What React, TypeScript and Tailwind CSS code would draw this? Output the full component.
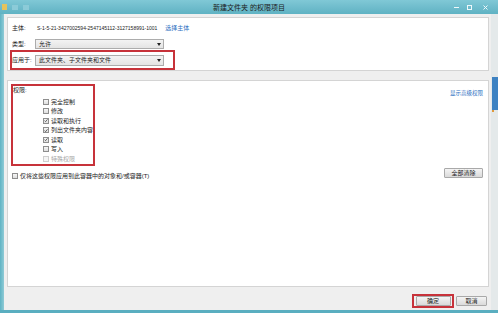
import React from 'react';

type BoxProps = { checked?: boolean; disabled?: boolean };

// small windows-style checkbox
function Box({ checked, disabled }: BoxProps) {
  return (
    <span
      className={`flex h-[6px] w-[6px] shrink-0 items-center justify-center border ${
        disabled ? 'border-[#cfcfcf] bg-[#f5f5f5]' : 'border-[#8e8e8e] bg-gradient-to-b from-[#f6f6f6] to-[#dedede]'
      }`}
    >
      {checked && (
        <svg width="5" height="5" viewBox="0 0 10 10">
          <path d="M1.5 5.2 L4 7.8 L8.8 2" fill="none" stroke="#333" strokeWidth="1.8" />
        </svg>
      )}
    </span>
  );
}

function Select({ value, h }: { value: string; h: string }) {
  return (
    <div
      className={`flex w-[129px] items-center justify-between border border-[#acacac] bg-gradient-to-b from-[#f3f3f3] to-[#e4e4e4] pl-[3px] pr-[2px] text-[6px] ${h}`}
    >
      <span>{value}</span>
      <svg width="4" height="3" viewBox="0 0 4 3">
        <path d="M0 0 H4 L2 3 Z" fill="#222" />
      </svg>
    </div>
  );
}

const PERMS: { label: string; checked?: boolean; disabled?: boolean }[] = [
  { label: '完全控制' },
  { label: '修改' },
  { label: '读取和执行', checked: true },
  { label: '列出文件夹内容', checked: true },
  { label: '读取', checked: true },
  { label: '写入' },
  { label: '特殊权限', disabled: true },
];

function Button({ label, w }: { label: string; w: string }) {
  return (
    <div
      className={`flex h-[10px] items-center justify-center rounded-[1px] border border-[#a9a9a9] bg-gradient-to-b from-[#f4f4f4] to-[#dadada] text-[6px] ${w}`}
    >
      {label}
    </div>
  );
}

export default function App() {
  return (
    <div className="flex h-[313px] w-[498px] flex-col overflow-hidden bg-[#5fb3c4] font-['Liberation_Sans','Noto_Sans_CJK_SC',sans-serif] leading-none text-[#222]">
      {/* title bar */}
      <div className="flex h-[14px] shrink-0 items-center bg-gradient-to-b from-[#80c8d6] to-[#5fb2c3]">
        <div className="flex w-[60px] items-center gap-[5px] pl-[2px]">
          <span className="h-[6px] w-[5px] bg-[#e6c35c]" />
          <span className="h-[5px] w-[6px] bg-[#8ccbd8]" />
          <span className="h-[5px] w-[6px] bg-[#8ccbd8]" />
        </div>
        <div className="flex-1 text-center text-[7px] text-[#1b1b1b]">新建文件夹 的权限项目</div>
        <div className="flex w-[60px] items-center justify-end gap-[3px] pr-[6px]">
          <span className="flex h-[8px] w-[10px] items-center justify-center">
            <span className="h-[1px] w-[5px] bg-[#eef8fa]" />
          </span>
          <span className="flex h-[8px] w-[11px] items-center justify-center">
            <span className="h-[5px] w-[5px] border border-[#eef8fa]" />
          </span>
          <span className="flex h-[8px] w-[14px] items-center justify-center">
            <svg width="5" height="5" viewBox="0 0 10 10">
              <path d="M1 1 L9 9 M9 1 L1 9" stroke="#eef8fa" strokeWidth="2" />
            </svg>
          </span>
        </div>
      </div>

      <div className="flex min-h-0 flex-1">
        <div className="w-[4px] bg-gradient-to-r from-[#5fb3c4] to-[#8fcbd6]" />

        {/* dialog body */}
        <div className="flex flex-1 flex-col bg-[#efefef] pl-[3px] pr-[2px] pt-[3px]">
          {/* principal panel */}
          <div className="h-[54px] shrink-0 border border-[#d4d4d4] bg-white pt-[5px]">
            <div className="flex h-[10px] items-center pl-[4px]">
              <span className="w-[25px] text-[6px]">主体:</span>
              <span className="text-[5px]">S-1-5-21-3427002594-2547145112-3127158991-1001</span>
              <span className="ml-[8px] text-[6px] text-[#2c6fbf]">选择主体</span>
            </div>
            <div className="mt-[6px] flex h-[10px] items-center pl-[4px]">
              <span className="w-[23px] text-[6px]">类型:</span>
              <Select value="允许" h="h-[10px]" />
            </div>
            <div className="ml-[2px] mt-[1px] flex h-[20px] w-[165px] items-center border-2 border-[#c7323a]">
              <span className="w-[23px] text-[6px]">应用于:</span>
              <Select value="此文件夹、子文件夹和文件" h="h-[11px]" />
            </div>
          </div>

          {/* permissions panel */}
          <div className="mt-[9px] h-[207px] shrink-0 border border-[#d4d4d4] bg-white pl-[3px] pt-[3px]">
            <div className="flex items-start justify-between">
              <div className="h-[82px] w-[84px] border-2 border-[#c7323a]">
                <div className="flex h-[8px] items-center text-[6px]">权限:</div>
                <div className="mt-[3px] flex flex-col pl-[30px]">
                  {PERMS.map((p) => (
                    <div key={p.label} className="flex h-[9.5px] items-center gap-[2px]">
                      <Box checked={p.checked} disabled={p.disabled} />
                      <span className={`text-[6px] ${p.disabled ? 'text-[#a8a8a8]' : ''}`}>{p.label}</span>
                    </div>
                  ))}
                </div>
              </div>
              <span className="mr-[5px] mt-[7px] text-[5.5px] text-[#2c6fbf]">显示高级权限</span>
            </div>
            <div className="mt-[2px] flex items-start justify-between">
              <div className="ml-[1px] mt-[5px] flex items-center gap-[2px]">
                <Box />
                <span className="text-[6px]">仅将这些权限应用到此容器中的对象和/或容器(T)</span>
              </div>
              <div className="mr-[5px]">
                <Button label="全部清除" w="w-[39px]" />
              </div>
            </div>
          </div>

          {/* footer */}
          <div className="flex flex-1 items-start justify-end gap-[2px] pr-[2px] pt-[7px]">
            <div className="flex h-[14px] w-[42px] items-center justify-center border-2 border-[#c7323a]">
              <Button label="确定" w="w-[35px]" />
            </div>
            <div className="mt-[2px]">
              <Button label="取消" w="w-[31px]" />
            </div>
          </div>
        </div>

        {/* background on the right */}
        <div className="flex w-[7px] flex-col bg-[#e4e9ea]">
          <div className="ml-[1px] mt-[63px] h-[33px] bg-[#3d82c2]" />
          <div className="ml-[1px] h-[2px] w-[2px] bg-[#e09a3c]" />
        </div>
      </div>

      <div className="h-[3px] shrink-0 bg-[#5aaec0]" />
    </div>
  );
}
